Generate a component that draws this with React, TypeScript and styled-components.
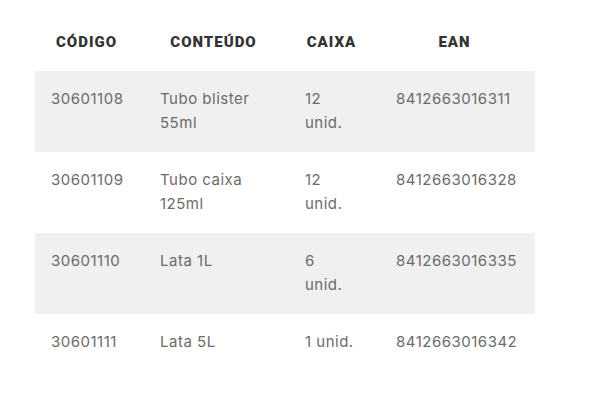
import React from "react";
import styled, { createGlobalStyle } from "styled-components";

const Global = createGlobalStyle`
  html, body { margin: 0; padding: 0; background: #ffffff; }
`;

const Page = styled.div`
  padding: 20px 35px;
  font-family: Inter, "Open Sans", sans-serif;
`;

const Table = styled.div`
  width: 500px;
  display: flex;
  flex-direction: column;
`;

const Row = styled.div<{ $shaded?: boolean }>`
  display: grid;
  grid-template-columns: 109px 145px 91px 155px;
  background: ${(p) => (p.$shaded ? "#f0f0f0" : "transparent")};
`;

const HeadCell = styled.div`
  padding: 14px 22px 20px 16px;
  text-align: center;
  font-family: Roboto, "Liberation Sans", sans-serif;
  font-weight: 900;
  font-size: 15px;
  letter-spacing: 1px;
  line-height: 17px;
  color: #333333;
  text-transform: uppercase;
  white-space: nowrap;
`;

const Cell = styled.div`
  padding: 16px 25px 18px 16px;
  font-size: 15px;
  letter-spacing: 0.5px;
  line-height: 23.5px;
  color: #6b6b6b;
`;

const rows = [
  ["30601108", "Tubo blister 55ml", "12 unid.", "8412663016311"],
  ["30601109", "Tubo caixa 125ml", "12 unid.", "8412663016328"],
  ["30601110", "Lata 1L", "6 unid.", "8412663016335"],
  ["30601111", "Lata 5L", "1 unid.", "8412663016342"],
];

export default function App() {
  return (
    <Page>
      <Global />
      <Table>
        <Row>
          {["Código", "Conteúdo", "Caixa", "EAN"].map((h) => (
            <HeadCell key={h}>{h}</HeadCell>
          ))}
        </Row>
        {rows.map((r, i) => (
          <Row key={r[0]} $shaded={i % 2 === 0}>
            {r.map((c, j) => (
              <Cell key={j}>{c}</Cell>
            ))}
          </Row>
        ))}
      </Table>
    </Page>
  );
}
